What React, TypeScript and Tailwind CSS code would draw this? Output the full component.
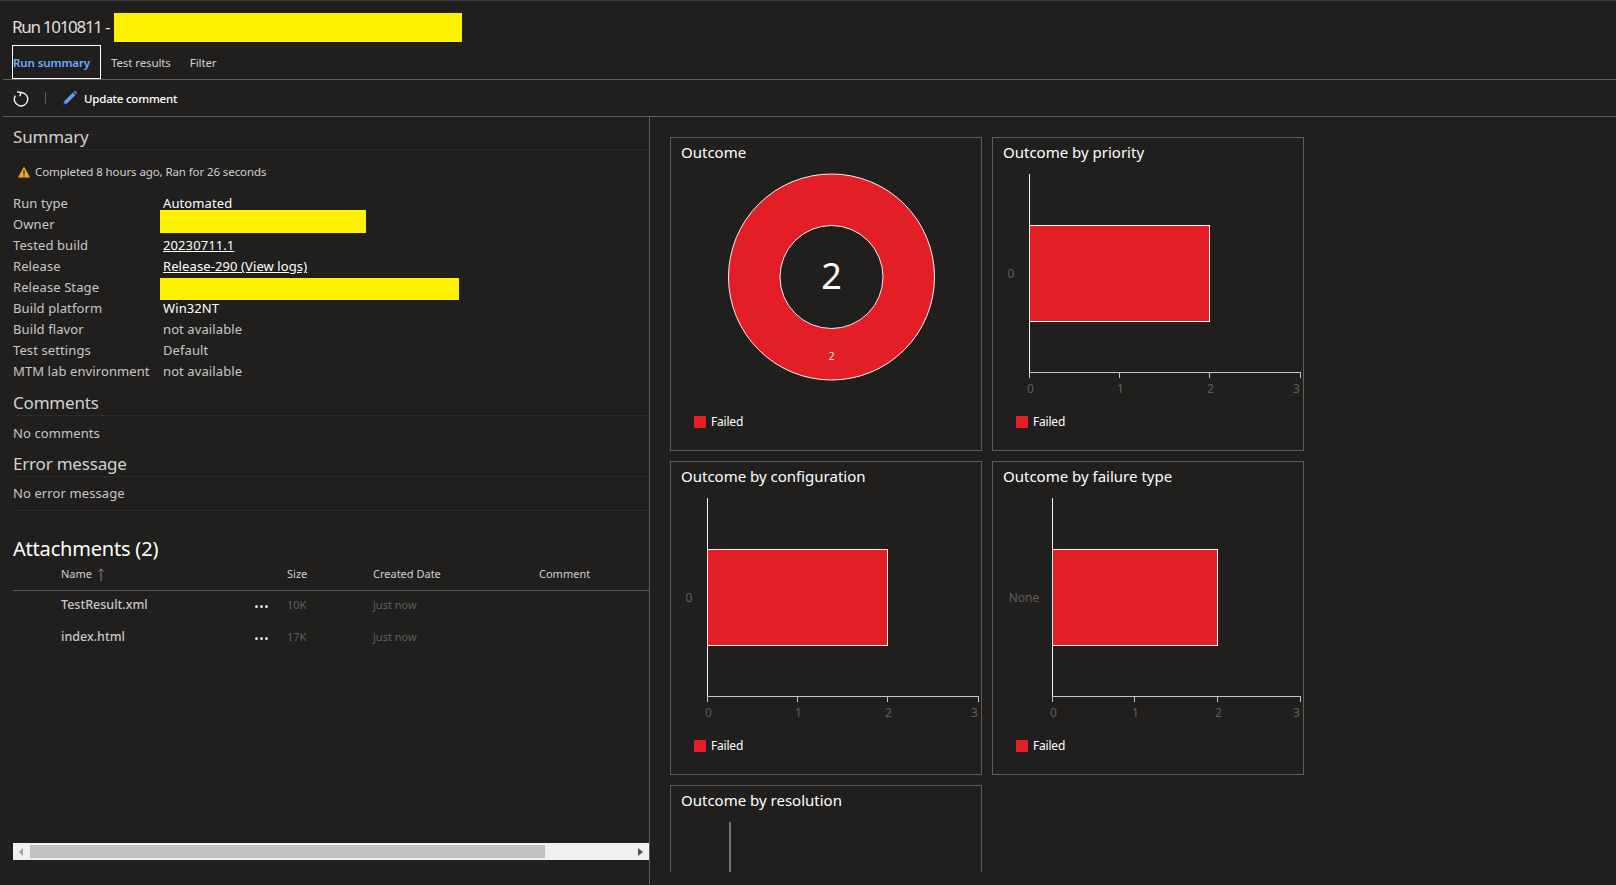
const rows = [
  { label: "Run type", value: "Automated", bright: true },
  { label: "Owner", redact: "w-[206px] h-[23px] -mt-[4px]" },
  { label: "Tested build", value: "20230711.1", link: true },
  { label: "Release", value: "Release-290 (View logs)", link: true },
  { label: "Release Stage", redact: "w-[299px] h-[22px] mt-[1px]" },
  { label: "Build platform", value: "Win32NT", bright: true },
  { label: "Build flavor", value: "not available" },
  { label: "Test settings", value: "Default" },
  { label: "MTM lab environment", value: "not available" },
]

const files = [
  { name: "TestResult.xml", size: "10K" },
  { name: "index.html", size: "17K" },
]

const SectionTitle = ({ children }: { children: string }) => (
  <div className="h-[25px] border-b border-[#2b2a29] text-[17px] leading-[23px] tracking-[-0.2px] text-[#d2d0ce]">{children}</div>
)

const Legend = () => (
  <div className="flex items-center gap-[5px] pl-[23px] text-[12px] leading-[14px] tracking-[-0.2px] text-white">
    <span className="w-[12px] h-[12px] bg-[#e31e26]"></span>
    Failed
  </div>
)

const Card = ({ title, children, legend = true }: { title: string; children: React.ReactNode; legend?: boolean }) => (
  <div className="h-[314px] border border-[#605e5c]">
    <div className="h-[32px] pl-[10px] pt-[4px] text-[15px] leading-[20px] text-white">{title}</div>
    {children}
    {legend && (
      <div className="pt-[13px]">
        <Legend />
      </div>
    )}
  </div>
)

const Donut = () => (
  <svg width="310" height="232" className="block">
    <circle cx="160.5" cy="107" r="103" fill="#e31e26" stroke="#f3f2f1" strokeWidth="1" />
    <circle cx="160.5" cy="107" r="51.5" fill="#201f1e" stroke="#f3f2f1" strokeWidth="1" />
    <text x="160.5" y="119" textAnchor="middle" fontSize="36" fill="#ffffff" fontFamily="Noto Sans">2</text>
    <text x="160.5" y="190" textAnchor="middle" fontSize="10" fill="#ffffff" fontFamily="Noto Sans">2</text>
  </svg>
)

const BarChart = ({ axis, ticks, label, labelX }: { axis: number; ticks: number[]; label: string; labelX: number }) => (
  <svg width="310" height="232" className="block">
    <rect x={axis} y="55.5" width={ticks[2] - axis} height="96" fill="#e31e26" stroke="#ffffff" strokeWidth="1" />
    <line x1={axis} y1="4" x2={axis} y2="202" stroke="#f3f2f1" strokeWidth="1" />
    <line x1={axis} y1="202.5" x2={ticks[3] + 0.5} y2="202.5" stroke="#c8c6c4" strokeWidth="1" />
    <text x={labelX} y="108" textAnchor="middle" fontSize="12" fill="#605e5c" fontFamily="Noto Sans">{label}</text>
    {ticks.map((t, i) => (
      <g key={t}>
        <line x1={t} y1="202" x2={t} y2="208" stroke="#c8c6c4" strokeWidth="1" />
        <text x={i === 3 ? t - 4 : t + 1} y="223" textAnchor="middle" fontSize="12" fill="#605e5c" fontFamily="Noto Sans">{i}</text>
      </g>
    ))}
  </svg>
)

const App = () => {
  return (
    <div className="w-[1616px] h-[885px] overflow-hidden bg-[#201f1e] border-t border-[#3b3a39] font-['Noto_Sans',sans-serif] text-[#c8c6c4]">
      <div className="h-[78px] pl-[12px]">
        <div className="flex items-center h-[44px] pt-[9px]">
          <span className="pb-[2px] text-[17px] tracking-[-1.3px] text-[#e1dfdd] mr-[5px]">Run 1010811 -</span>
          <span className="w-[348px] h-[29px] bg-[#fff200]"></span>
        </div>
        <div className="flex items-center h-[34px] text-[11.5px] tracking-[-0.1px]">
          <div className="flex items-center w-[89px] h-[34px] pt-[2px] border border-white text-[#69aeff] font-semibold">Run summary</div>
          <span className="ml-[10px] pt-[2px] text-[#d2d0ce]">Test results</span>
          <span className="ml-[19px] pt-[2px] text-[#d2d0ce]">Filter</span>
        </div>
      </div>
      <div className="ml-[3px] h-[38px] border-t border-b border-[#605e5c] flex items-center pl-[10px] text-[11.5px] tracking-[-0.2px] text-white">
        <svg width="16" height="16" viewBox="0 0 16 16" fill="none" className="mt-[1px]">
          <path d="M8 1.5A6.7 6.7 0 1 1 2.4 4.6" stroke="#f3f2f1" strokeWidth="1.4" />
          <path d="M4.2 0.8L8 1.6L6.8 5.2" stroke="#f3f2f1" strokeWidth="1.4" />
        </svg>
        <span className="ml-[16px] w-px h-[12px] bg-[#605e5c]"></span>
        <svg width="16" height="16" viewBox="0 0 16 16" className="ml-[16px]">
          <path d="M1.5 14.5L2.4 11L11 2.5L13.5 5L5 13.5Z" fill="#5a9cf5" />
          <path d="M11.8 1.8L13 0.8L15 2.8L14 4.2Z" fill="#5a9cf5" />
          <path d="M1.5 14.5L2.2 12L4 13.8Z" fill="#2c6dbd" />
        </svg>
        <span className="ml-[6px] pt-[1px] font-medium">Update comment</span>
      </div>
      <div className="flex h-[767px]">
        <div className="w-[649px] pl-[13px] flex flex-col">
          <div className="pt-[8px]">
            <SectionTitle>Summary</SectionTitle>
          </div>
          <div className="flex items-center h-[26px] mt-[9px] pl-[5px] text-[11.5px] tracking-[-0.1px] text-[#d2d0ce]">
            <svg width="12" height="12" viewBox="0 0 12 12" className="mr-[5px]">
              <path d="M6 0.5L12 11.5L0 11.5Z" fill="#f5a623" />
              <rect x="5.4" y="4" width="1.2" height="4.4" fill="#201f1e" />
              <rect x="5.4" y="9.2" width="1.2" height="1.2" fill="#201f1e" />
            </svg>
            Completed 8 hours ago, Ran for 26 seconds
          </div>
          <div className="mt-[8px] text-[13px] leading-[21px] tracking-[0.1px]">
            {rows.map((r) => (
              <div key={r.label} className="flex h-[21px]">
                <span className="w-[150px] shrink-0 text-[#c8c6c4]">{r.label}</span>
                {r.redact ? (
                  <span className={`${r.redact} bg-[#fff200] -ml-[3px]`}></span>
                ) : (
                  <span className={r.link ? "text-white underline" : r.bright ? "text-white" : "text-[#c8c6c4]"}>{r.value}</span>
                )}
              </div>
            ))}
          </div>
          <div className="mt-[9px]">
            <SectionTitle>Comments</SectionTitle>
          </div>
          <div className="h-[36px] flex items-center text-[13px] tracking-[0.1px]">No comments</div>
          <SectionTitle>Error message</SectionTitle>
          <div className="h-[34px] flex items-center text-[13px] tracking-[0.1px] border-b border-[#2b2a29]">No error message</div>
          <div className="mt-[26px] text-[20px] leading-[24px] tracking-[-0.2px] text-white">Attachments (2)</div>
          <div className="grid grid-cols-[48px_194px_32px_86px_166px_1fr] items-center h-[30px] pb-[3px] border-b border-[#605e5c] text-[11px] text-[#d2d0ce]">
            <span></span>
            <span className="col-span-2 flex items-center gap-[5px]">
              Name
              <svg width="8" height="13" viewBox="0 0 8 13">
                <path d="M4 13V1M1.5 3.5L4 1L6.5 3.5" stroke="#8f7f8c" strokeWidth="1" fill="none" />
              </svg>
            </span>
            <span>Size</span>
            <span>Created Date</span>
            <span>Comment</span>
          </div>
          {files.map((f) => (
            <div key={f.name} className="grid grid-cols-[48px_194px_32px_86px_166px_1fr] items-center h-[32px] pb-[4px] text-[11px] text-[#605e5c]">
              <span></span>
              <span className="text-[12.5px] font-medium text-[#c8c6c4]">{f.name}</span>
              <span className="flex gap-[2px] pt-[2px]">
                <i className="w-[3px] h-[3px] rounded-full bg-[#e1dfdd]"></i>
                <i className="w-[3px] h-[3px] rounded-full bg-[#e1dfdd]"></i>
                <i className="w-[3px] h-[3px] rounded-full bg-[#e1dfdd]"></i>
              </span>
              <span>{f.size}</span>
              <span>just now</span>
              <span></span>
            </div>
          ))}
          <div className="mt-auto mb-[24px] h-[17px] bg-[#f0f0f0] flex items-center">
            <div className="w-[17px] flex justify-center">
              <svg width="5" height="8" viewBox="0 0 5 8"><path d="M4 0V8L0 4Z" fill="#a3a3a3" /></svg>
            </div>
            <div className="w-[515px] h-[13px] bg-[#c0c0c0]"></div>
            <div className="flex-1 flex justify-end pr-[6px]">
              <svg width="5" height="8" viewBox="0 0 5 8"><path d="M0 0V8L5 4Z" fill="#505050" /></svg>
            </div>
          </div>
        </div>
        <div className="flex-1 border-l border-[#605e5c] pl-[20px] pt-[20px] pb-[12px]">
          <div className="h-full overflow-hidden grid grid-cols-[312px_312px] auto-rows-[314px] gap-x-[10px] gap-y-[10px]">
            <Card title="Outcome">
              <Donut />
            </Card>
            <Card title="Outcome by priority">
              <BarChart axis={36.5} ticks={[36.5, 126.5, 216.5, 307.5]} label="0" labelX={18} />
            </Card>
            <Card title="Outcome by configuration">
              <BarChart axis={36.5} ticks={[36.5, 126.5, 216.5, 307.5]} label="0" labelX={18} />
            </Card>
            <Card title="Outcome by failure type">
              <BarChart axis={59.5} ticks={[59.5, 141.5, 224.5, 307.5]} label="None" labelX={31} />
            </Card>
            <Card title="Outcome by resolution" legend={false}>
              <svg width="310" height="232" className="block">
                <line x1="59" y1="4" x2="59" y2="202" stroke="#c8c6c4" strokeWidth="1" />
              </svg>
            </Card>
          </div>
        </div>
      </div>
    </div>
  )
}

export default App
